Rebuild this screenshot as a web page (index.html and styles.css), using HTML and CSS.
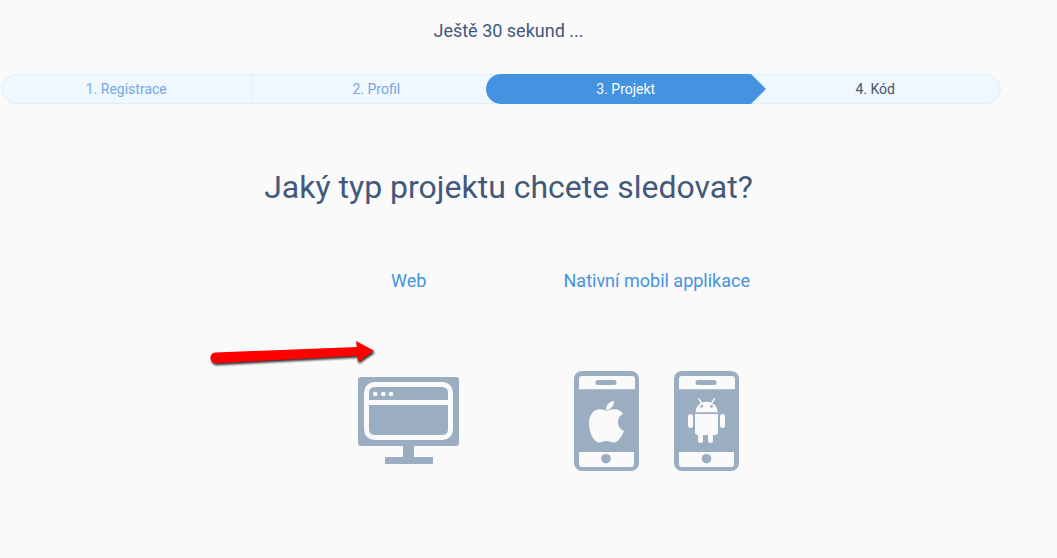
FILE: index.html
```html
<!DOCTYPE html>
<html lang="cs">
  <head>
    <meta charset="utf-8">
    <title>Jaký typ projektu chcete sledovat?</title>
    <link rel="stylesheet" href="styles.css">
  </head>
  <body>
    <div class="page">
      <p class="remaining">Ještě 30 sekund ...</p>

      <ol class="steps">
        <li class="step done">1. Registrace</li>
        <li class="step done">2. Profil</li>
        <li class="step active" aria-current="step">3. Projekt</li>
        <li class="step">4. Kód</li>
      </ol>

      <h1>Jaký typ projektu chcete sledovat?</h1>

      <div class="choices">
        <a class="choice" href="#web">
          <span class="choice-name">Web</span>
          <span class="icons">
            <svg width="101" height="88" viewBox="0 0 101 88" aria-hidden="true">
              <rect class="shape" width="101" height="69" rx="3"/>
              <rect class="line" x="8.5" y="7.5" width="84" height="53" rx="8"/>
              <path class="cut" d="M8 23h85v5H8z"/>
              <circle class="cut" cx="17.3" cy="17" r="2.3"/>
              <circle class="cut" cx="25.3" cy="17" r="2.3"/>
              <circle class="cut" cx="33" cy="17" r="2.3"/>
              <path class="shape" d="M45 68h11v12h19v7H27v-7h18z"/>
            </svg>
          </span>
        </a>
        <a class="choice" href="#mobil">
          <span class="choice-name">Nativní mobil applikace</span>
          <span class="icons">
            <svg width="65" height="100" viewBox="0 0 65 100" aria-hidden="true">
              <rect class="shape" width="65" height="100" rx="8"/>
              <path class="cut" d="M5 18.3V8q0-3 3-3h50q3 0 3 3v10.3zM5 81h55v12q0 3-3 3H8q-3 0-3-3z"/>
              <rect class="shape" x="21.5" y="9" width="21" height="5" rx="2.5"/>
              <circle class="shape" cx="32" cy="87.7" r="4.8"/>
              <path class="cut" d="M32.5 39.8C35 39 37.5 38.3 40.5 38.3c3.500 0 6.500 1.600 8.500 4.400-3.300 2-5 4.800-5 8.300 0 4.300 2.300 7.400 6 9-1.500 4.300-4.800 9.500-8.500 11.300-3.500 1-5.500-1.300-9-1.300s-6 2.200-9 1.200C19 69.500 15 61 15 52.500c0-8.500 4.500-14 11-14.200 2.500 0 4.500 1 6.500 1.500z"/>
              <path class="cut" d="M32 39c-.3-4.500 3-8.500 8-9 .3 4.600-3.200 8.800-8 9z"/>
            </svg>
            <svg width="65" height="100" viewBox="0 0 65 100" aria-hidden="true">
              <rect class="shape" width="65" height="100" rx="8"/>
              <path class="cut" d="M5 18.3V8q0-3 3-3h50q3 0 3 3v10.3zM5 81h55v12q0 3-3 3H8q-3 0-3-3z"/>
              <rect class="shape" x="21.5" y="9" width="21" height="5" rx="2.5"/>
              <circle class="shape" cx="32.5" cy="87.7" r="4.8"/>
              <path class="cut" d="M21.5 41.3c.3-6 4.500-10.600 11-10.600s10.900 4.600 11.200 10.600z"/>
              <path class="antenna" d="M24.800 27.800l3 4.500M40.400 27.800l-3 4.500"/>
              <circle class="shape" cx="27.6" cy="35.3" r="1.4"/>
              <circle class="shape" cx="37.5" cy="35.3" r="1.4"/>
              <path class="cut" d="M21 43h23v18q0 3-3 3H24q-3 0-3-3z"/>
              <rect class="cut" x="14" y="43" width="5" height="14" rx="2.5"/>
              <rect class="cut" x="46" y="43" width="5" height="14" rx="2.5"/>
              <rect class="cut" x="24" y="58" width="5" height="14" rx="2.5"/>
              <rect class="cut" x="34" y="58" width="5" height="14" rx="2.5"/>
            </svg>
          </span>
        </a>

        <!-- red arrow lying over the choices -->
        <svg class="pointer" width="176" height="32" viewBox="0 0 176 32" aria-hidden="true">
          <path d="M7.500 12.500L149 7 148 1l18 9.700L150 22l-1-6.300L8 23.200c-7 0-7.500-10.200-.5-10.700z"/>
        </svg>
      </div>
    </div>
  </body>
</html>
```

FILE: styles.css
```css
body {
  margin: 0;
  background-color: #fafafa;
  color: #42597a;
  font-family: Roboto, "Liberation Sans", sans-serif;
}
.page {
  padding: 19px 40px 40px 0;
  text-align: center;
}
.remaining {
  margin: 0;
  font-size: 18px;
  line-height: 24px;
}

/* progress bar */
.steps {
  display: flex;
  box-sizing: border-box;
  height: 30px;
  margin: 31px 16px 0 1px;
  padding: 0;
  list-style: none;
  background-color: #eff7ff;
  border: 1px solid #deefff;
  border-radius: 15px;
}
.step {
  box-sizing: border-box;
  width: 25%;
  font-size: 14px;
  line-height: 28px;
  color: #4a5568;
}
.step.done {
  color: #75a9de;
}
.step.done:first-child {
  border-right: 1px solid #deefff;
}
.step.active {
  position: relative;
  z-index: 0;
  color: #fff;
}
.step.active::before {
  content: "";
  position: absolute;
  z-index: -1;
  top: -1px;
  bottom: -1px;
  left: -15px;
  right: 0;
  background-color: #4593e0;
  border-radius: 15px 0 0 15px;
}
.step.active::after {
  content: "";
  position: absolute;
  top: -1px;
  left: 100%;
  border: 15px solid transparent;
  border-left-color: #4593e0;
  border-right-width: 0;
}

h1 {
  margin: 63px 0 0;
  font-size: 32px;
  font-weight: 400;
  line-height: 40px;
}

/* project types */
.choices {
  position: relative;
  display: grid;
  grid-template-columns: 248px 248px;
  margin: 62px 0 0 28%;
}
.choice {
  color: #4593e0;
  text-decoration: none;
}
.choice-name {
  display: block;
  font-size: 18px;
  line-height: 24px;
}
.icons {
  display: flex;
  justify-content: center;
  align-items: center;
  gap: 35px;
  height: 100px;
  margin-top: 78px;
}
.shape {
  fill: #9badc0;
}
.cut {
  fill: #fafafa;
}
.line {
  fill: none;
  stroke: #fafafa;
  stroke-width: 5;
}
.antenna {
  stroke: #fafafa;
  stroke-width: 1.5;
  stroke-linecap: round;
}
.pointer {
  position: absolute;
  top: 71px;
  left: -77px;
  overflow: visible;
  fill: #f00;
  filter: drop-shadow(1px 2px 1px rgba(0, 0, 0, 0.8));
}
```
